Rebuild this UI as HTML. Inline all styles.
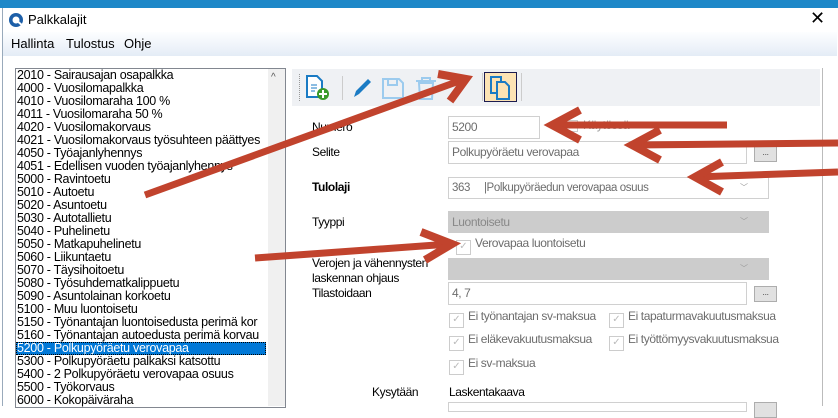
<!DOCTYPE html>
<html><head><meta charset="utf-8"><style>
*{margin:0;padding:0;box-sizing:border-box}
body{width:838px;height:406px;overflow:hidden;background:#fff;font-family:"Liberation Sans",Arial,sans-serif;font-size:12px;letter-spacing:-0.4px;color:#000;position:relative}
.a{position:absolute;white-space:nowrap}
.top{left:0;top:0;width:838px;height:8px;background:#1e88c8}
.win{left:2px;top:8px;width:835px;height:398px;background:#fff;border-left:1px solid #9ab}
.menu{left:3px;top:32px;width:834px;height:24px;background:linear-gradient(#fdfeff,#e4ecf6)}
.mt{font-size:13px;letter-spacing:0}
.list{left:15px;top:68px;width:271px;height:340px;border:1px solid #828790;background:#fff;overflow:hidden}
.list div{height:13px;line-height:13px;padding-left:1px;white-space:nowrap;font-size:12.5px;letter-spacing:-0.3px}
.sel{background:#0078d7;color:#fff;outline:1px dotted #000;outline-offset:-1px;width:250px}
.sb{left:268px;top:69px;width:17px;height:337px;background:#f0f0f0}
.inp{border:1px solid #d0d0d0;background:#fff;color:#6d6d6d;padding-left:3px;line-height:20px}
.gr{background:#ccc;border:1px solid #ccc;color:#888;padding-left:3px;line-height:20px}
.btn{width:23px;height:16px;background:#e1e1e1;border:1px solid #adadad;font-size:9px;text-align:center;line-height:10px;color:#555}
.cb{color:#6d6d6d}
.cb:before{content:"✓";display:inline-block;width:13px;height:13px;border:1px solid #ccc;color:#bbb;font-size:10px;line-height:12px;text-align:center;margin-right:4px;vertical-align:-2px;letter-spacing:0}
.arr{position:absolute;font-size:8px;color:#999}
</style></head><body>
<div class="a top"></div>
<div class="a win"></div>
<svg class="a" style="left:8px;top:12px" width="16" height="16"><circle cx="8" cy="8" r="7" fill="#1d5fa8"/><circle cx="8" cy="8" r="3.5" fill="#fff"/><path d="M8 8 L15 14" stroke="#fff" stroke-width="2"/></svg>
<div class="a mt" style="left:28px;top:12px">Palkkalajit</div>
<div class="a" style="left:810px;top:8px;font-size:18px">✕</div>
<div class="a menu"></div>
<div class="a mt" style="left:11px;top:36px">Hallinta</div>
<div class="a mt" style="left:66px;top:36px">Tulostus</div>
<div class="a mt" style="left:124px;top:36px">Ohje</div>
<div class="a" style="left:822px;top:68px;width:1px;height:338px;background:#bbb"></div>
<div class="a list">
<div>2010 - Sairausajan osapalkka</div><div>4000 - Vuosilomapalkka</div><div>4010 - Vuosilomaraha 100 %</div><div>4011 - Vuosilomaraha 50 %</div><div>4020 - Vuosilomakorvaus</div><div>4021 - Vuosilomakorvaus työsuhteen päättyes</div><div>4050 - Työajanlyhennys</div><div>4051 - Edellisen vuoden työajanlyhennys</div><div>5000 - Ravintoetu</div><div>5010 - Autoetu</div><div>5020 - Asuntoetu</div><div>5030 - Autotallietu</div><div>5040 - Puhelinetu</div><div>5050 - Matkapuhelinetu</div><div>5060 - Liikuntaetu</div><div>5070 - Täysihoitoetu</div><div>5080 - Työsuhdematkalippuetu</div><div>5090 - Asuntolainan korkoetu</div><div>5100 - Muu luontoisetu</div><div>5150 - Työnantajan luontoisedusta perimä kor</div><div>5160 - Työnantajan autoedusta perimä korvau</div><div class="sel">5200 - Polkupyöräetu verovapaa</div><div>5300 - Polkupyöräetu palkaksi katsottu</div><div>5400 - 2 Polkupyöräetu verovapaa osuus</div><div>5500 - Työkorvaus</div><div>6000 - Kokopäiväraha</div>
</div>
<div class="a sb"></div>
<div class="a" style="left:271px;top:72px;font-size:10px;color:#555">^</div>
<div class="a" style="left:292px;top:69px;width:528px;height:37px;background:#eff1f4"></div>
<div class="a" style="left:299px;top:74px;width:0;height:27px;border-left:1px dotted #999"></div>
<svg class="a" style="left:304px;top:74px" width="30" height="28"><path d="M3 2h10l5 5v16H3z" fill="#fff" stroke="#1a7bc4" stroke-width="2"/><path d="M7 11h6M7 14h6M7 17h4" stroke="#1a7bc4"/><circle cx="19" cy="20" r="6" fill="#3a9a2a"/><path d="M19 16v8M15 20h8" stroke="#fff" stroke-width="2"/></svg>
<div class="a" style="left:342px;top:76px;width:1px;height:24px;background:#ccc"></div>
<svg class="a" style="left:350px;top:76px" width="24" height="24"><path d="M4 21l2-6L18 3l3 3L9 18z" fill="#1a7bc4"/></svg>
<svg class="a" style="left:380px;top:76px" width="26" height="24"><path d="M3 3h16l4 4v15H3z" fill="none" stroke="#9ccbee" stroke-width="2"/><path d="M8 3v6h9V3" fill="none" stroke="#9ccbee" stroke-width="2"/></svg>
<svg class="a" style="left:413px;top:76px" width="26" height="24"><path d="M3 5h20M9 5V2h8v3M6 7h14l-1 16H7z" fill="none" stroke="#9ccbee" stroke-width="2"/></svg>
<div class="a" style="left:482px;top:73px;width:1px;height:28px;background:#ccc"></div>
<div class="a" style="left:484px;top:72px;width:33px;height:30px;background:#fce3b4;border:1px solid #1c1c50"></div>
<svg class="a" style="left:487px;top:75px" width="28" height="26"><path d="M4 2h10v16H4z" fill="none" stroke="#1a7bc4" stroke-width="2"/><path d="M10 7h8l4 4v13H10z" fill="#fce3b4" stroke="#1a7bc4" stroke-width="2"/></svg>
<div class="a" style="left:521px;top:73px;width:1px;height:28px;background:#ccc"></div>

<div class="a" style="left:312px;top:120px">Numero</div>
<div class="a inp" style="left:448px;top:116px;width:92px;height:23px">5200</div>
<div class="a" style="left:566px;top:120px;width:12px;height:12px;border:1px solid #ccc"></div>
<div class="a" style="left:583px;top:118px;color:#999">Käytössä</div>
<div class="a" style="left:312px;top:145px">Selite</div>
<div class="a inp" style="left:448px;top:141px;width:299px;height:23px">Polkupyöräetu verovapaa</div>
<div class="a btn" style="left:754px;top:146px">...</div>
<div class="a" style="left:312px;top:180px;font-weight:bold;font-size:12px">Tulolaji</div>
<div class="a inp" style="left:448px;top:177px;width:321px;height:22px;font-size:11.5px">363 &nbsp;&nbsp;&nbsp;&nbsp;|Polkupyöräedun verovapaa osuus</div>
<div class="arr" style="left:740px;top:182px">﹀</div>
<div class="a" style="left:312px;top:215px">Tyyppi</div>
<div class="a gr" style="left:448px;top:211px;width:321px;height:22px">Luontoisetu</div>
<div class="arr" style="left:740px;top:216px">﹀</div>
<div class="a cb" style="left:456px;top:236px">Verovapaa luontoisetu</div>
<div class="a" style="left:312px;top:256px;line-height:15px">Verojen ja vähennysten<br>laskennan ohjaus<br>Tilastoidaan</div>
<div class="a gr" style="left:448px;top:258px;width:321px;height:22px"></div>
<div class="arr" style="left:740px;top:263px">﹀</div>
<div class="a inp" style="left:448px;top:282px;width:299px;height:23px">4, 7</div>
<div class="a btn" style="left:754px;top:286px">...</div>
<div class="a cb" style="left:449px;top:309px">Ei työnantajan sv-maksua</div>
<div class="a cb" style="left:609px;top:309px">Ei tapaturmavakuutusmaksua</div>
<div class="a cb" style="left:449px;top:332px">Ei eläkevakuutusmaksua</div>
<div class="a cb" style="left:609px;top:332px">Ei työttömyysvakuutusmaksua</div>
<div class="a cb" style="left:449px;top:356px">Ei sv-maksua</div>
<div class="a" style="left:372px;top:385px">Kysytään</div>
<div class="a" style="left:449px;top:385px">Laskentakaava</div>
<div class="a inp" style="left:448px;top:402px;width:299px;height:10px"></div>
<div class="a btn" style="left:754px;top:402px"></div>

<svg class="a" style="left:0;top:0" width="838" height="406">
<g stroke="#c1432d" stroke-width="7" fill="none" stroke-linecap="butt">
<path d="M145 195L462 80"/><path d="M438 74L466 79L450 101" stroke-width="8"/>
<path d="M727 125L552 125"/><path d="M580 110L552 125L580 140" stroke-width="8"/>
<path d="M838 143L632 145"/><path d="M660 130L632 145L660 160" stroke-width="8"/>
<path d="M838 172L695 177"/><path d="M722 162L695 177L722 192" stroke-width="8"/>
<path d="M255 258L450 244"/><path d="M421 232L452 244L425 260" stroke-width="8"/>
</g></svg>
</body></html>
